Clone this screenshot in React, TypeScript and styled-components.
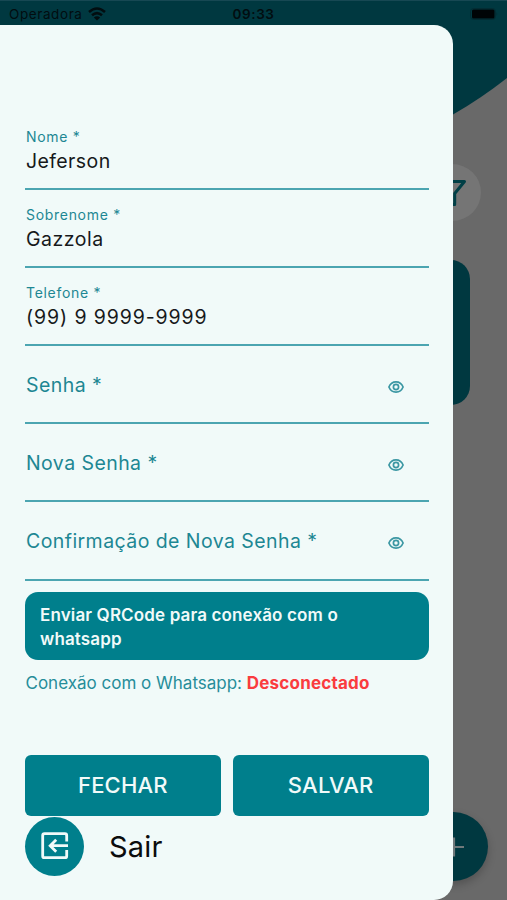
import React from "react";
import styled, { createGlobalStyle } from "styled-components";

const TEAL = "#007f8c";
const DARK_TEAL = "#003840";

const GlobalStyle = createGlobalStyle`
  *, *::before, *::after { box-sizing: border-box; }
  body { margin: 0; font-family: Inter, "Liberation Sans", sans-serif; }
  button { font: inherit; border: 0; padding: 0; }
`;

const Screen = styled.div`
  display: grid;
  grid-template-rows: 25px 875px;
  grid-template-columns: 507px;
  width: 507px;
  height: 900px;
  overflow: hidden;
  background: #696969;
`;

const Page = styled.div`
  grid-area: 1 / 1 / 3 / 2;
  display: flex;
  flex-direction: column;
  align-items: flex-end;
  height: 900px;
`;

const Wave = styled.svg`
  display: block;
  flex: none;
`;

const FilterButton = styled.div`
  display: flex;
  align-items: center;
  justify-content: center;
  width: 58px;
  height: 57px;
  margin: 13px 26px 0 0;
  border-radius: 50%;
  background: #757575;
`;

const Card = styled.div`
  width: 434px;
  height: 145px;
  margin: 39px 37px 0 0;
  border-radius: 19px;
  background: ${DARK_TEAL};
`;

const AddButton = styled.div`
  display: flex;
  align-items: center;
  justify-content: center;
  width: 69px;
  height: 69px;
  margin: auto 19px 19px 0;
  border-radius: 50%;
  background: ${DARK_TEAL};
  box-shadow: 0 4px 8px rgba(0, 0, 0, 0.22);
`;

const StatusBar = styled.header`
  grid-area: 1 / 1;
  z-index: 1;
  display: grid;
  grid-template-columns: 1fr auto 1fr;
  align-items: center;
  padding: 1px 9px 0;
  border-top: 1px solid #174853;
  color: #020d10;
  font-size: 13.5px;
  line-height: 20px;
`;

const Carrier = styled.div`
  display: flex;
  align-items: center;
  gap: 5px;
  letter-spacing: 0.6px;
`;

const Clock = styled.div`
  font-weight: 600;
  letter-spacing: 0.6px;
`;

const Battery = styled.svg`
  justify-self: end;
`;

const Drawer = styled.main`
  grid-area: 2 / 1;
  z-index: 1;
  display: flex;
  flex-direction: column;
  width: 453px;
  height: 875px;
  padding: 86.7px 24.5px 0 25px;
  border-radius: 0 19px 19px 0;
  background: #f1faf9;
`;

const FieldBox = styled.div<{ $empty?: boolean }>`
  display: flex;
  flex-direction: ${(p) => (p.$empty ? "row" : "column")};
  align-items: ${(p) => (p.$empty ? "center" : "stretch")};
  justify-content: ${(p) => (p.$empty ? "space-between" : "flex-start")};
  flex: none;
  height: 78.15px;
  padding: ${(p) => (p.$empty ? "2px 24.5px 0 1px" : "15.5px 0 0 1px")};
  border-bottom: 2px solid #4ca5b1;
`;

const FloatingLabel = styled.label`
  color: #1d8793;
  font-size: 14px;
  line-height: 20px;
  letter-spacing: 0.7px;
`;

const Value = styled.div<{ $spacing: number }>`
  color: #17191b;
  font-size: 19.5px;
  line-height: 29px;
  letter-spacing: ${(p) => p.$spacing}px;
`;

const Placeholder = styled.label`
  color: #1d8793;
  font-size: 19.5px;
  line-height: 28px;
  letter-spacing: 0.43px;
`;

const QrButton = styled.button`
  flex: none;
  height: 68px;
  margin-top: 11.6px;
  padding: 1px 15px 0;
  border-radius: 13px;
  background: ${TEAL};
  color: #f1faf9;
  font-size: 17px;
  font-weight: 600;
  line-height: 24px;
  letter-spacing: 0.14px;
  text-align: left;
`;

const Connection = styled.p`
  margin: 11px 0 0 0.5px;
  color: #268d99;
  font-size: 17px;
  line-height: 24px;
  white-space: nowrap;
`;

const Disconnected = styled.strong`
  color: #fa3c3e;
  font-weight: 700;
  letter-spacing: 0.2px;
`;

const Actions = styled.div`
  display: grid;
  grid-template-columns: 1fr 1fr;
  gap: 12px;
  margin-top: 59.5px;
`;

const ActionButton = styled.button`
  height: 61px;
  border-radius: 6px;
  background: ${TEAL};
  color: #f1faf9;
  font-size: 22px;
  font-weight: 500;
  letter-spacing: 0.2px;
`;

const Logout = styled.div`
  display: flex;
  align-items: center;
  gap: 25px;
  margin-top: 1px;
  color: #0b0c0d;
  font-size: 29px;
  line-height: 40px;
`;

const LogoutLabel = styled.span`
  padding-top: 2px;
  letter-spacing: 0.2px;
`;

const LogoutIcon = styled.span`
  display: flex;
  align-items: center;
  justify-content: center;
  width: 59px;
  height: 59px;
  border-radius: 50%;
  background: ${TEAL};
`;

const EyeIcon = styled.svg`
  margin-top: 3px;
`;

const Eye = () => (
  <EyeIcon width="16" height="12" viewBox="0 0 16 12" fill="none" stroke="#3b97a3" strokeWidth="1.7">
    <path d="M.9 6C2.3 2.6 5 .9 8 .9S13.7 2.6 15.1 6C13.7 9.4 11 11.1 8 11.1S2.3 9.4.9 6Z" strokeLinejoin="round" />
    <circle cx="8" cy="6" r="2.6" />
  </EyeIcon>
);

const filled = [
  { label: "Nome *", value: "Jeferson", spacing: 0.4 },
  { label: "Sobrenome *", value: "Gazzola", spacing: 0.5 },
  { label: "Telefone *", value: "(99) 9 9999-9999", spacing: 0.9 },
];
const passwords = ["Senha *", "Nova Senha *", "Confirmação de Nova Senha *"];

export default function App() {
  return (
    <>
      <GlobalStyle />
      <Screen>
        <Page>
          <Wave width="507" height="151" viewBox="0 0 507 151">
            <path d="M0 0H507V78Q481 98.5 453 114.5Q360 151 200 151H0Z" fill={DARK_TEAL} />
          </Wave>
          <FilterButton>
            <svg width="32" height="32" viewBox="0 0 32 32" fill="none" stroke="#003f46" strokeWidth="3" strokeLinejoin="round">
              <path d="M3 4.5H28.5L18.7 16.5V27.5H16L13 24V16.5Z" />
            </svg>
          </FilterButton>
          <Card />
          <AddButton>
            <svg width="22" height="22" viewBox="0 0 22 22" stroke="#70797b" strokeWidth="2.2">
              <path d="M1 11H21M11 1.5V20.5" />
            </svg>
          </AddButton>
        </Page>
        <StatusBar>
          <Carrier>
            Operadora
            <svg width="18" height="14" viewBox="0 0 18 14" fill="none" stroke="#020d10" strokeWidth="2.5">
              <path d="M1 5Q9-2 17 5M4 8.3Q9 4 14 8.3" />
              <path d="M9 13.5L5.8 10.5Q9 8 12.2 10.5Z" fill="#020d10" stroke="none" />
            </svg>
          </Carrier>
          <Clock>09:33</Clock>
          <Battery width="28" height="12" viewBox="0 0 28 12">
            <rect x=".5" y=".5" width="25" height="11" rx="3" fill="none" stroke="#032c33" />
            <rect x="2" y="1.5" width="22.5" height="9" rx="1.5" fill="#000406" />
            <path d="M26.5 4Q28 6 26.5 8Z" fill="#032c33" />
          </Battery>
        </StatusBar>
        <Drawer>
          {filled.map((f) => (
            <FieldBox key={f.label}>
              <FloatingLabel>{f.label}</FloatingLabel>
              <Value $spacing={f.spacing}>{f.value}</Value>
            </FieldBox>
          ))}
          {passwords.map((p) => (
            <FieldBox key={p} $empty>
              <Placeholder>{p}</Placeholder>
              <Eye />
            </FieldBox>
          ))}
          <QrButton>Enviar QRCode para conexão com o whatsapp</QrButton>
          <Connection>
            Conexão com o Whatsapp: <Disconnected>Desconectado</Disconnected>
          </Connection>
          <Actions>
            <ActionButton>FECHAR</ActionButton>
            <ActionButton>SALVAR</ActionButton>
          </Actions>
          <Logout>
            <LogoutIcon>
              <svg width="28" height="28" viewBox="0 0 28 28" fill="none" stroke="#f1faf9" strokeWidth="2.8">
                <path d="M25.7 9.5V3.5Q25.7 1.7 23.9 1.7H3.5Q1.7 1.7 1.7 3.5V23.9Q1.7 25.7 3.5 25.7H23.9Q25.7 25.7 25.7 23.9V18M27 13.7H9.5M15.2 7.7L9.2 13.7L15.2 19.7" />
              </svg>
            </LogoutIcon>
            <LogoutLabel>Sair</LogoutLabel>
          </Logout>
        </Drawer>
      </Screen>
    </>
  );
}
